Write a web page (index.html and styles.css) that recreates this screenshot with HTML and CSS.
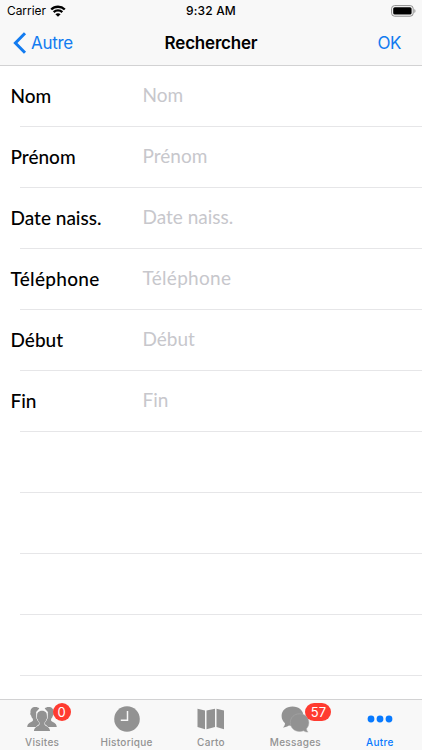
FILE: index.html
```html
<!DOCTYPE html>
<html lang="fr">
<head>
<meta charset="utf-8">
<title>Rechercher</title>
<link rel="stylesheet" href="styles.css">
</head>
<body>
<header class="top">
  <div class="status">
    <div class="carrier"><span>Carrier</span>
      <svg width="16" height="12" viewBox="0 0 16 12"><path d="M1.2 4.500C5 .8 11 .8 14.800 4.500M3.700 7.100c2.400-2.300 6.200-2.300 8.600 0" fill="none" stroke="#000" stroke-width="2.400"/><path d="M8 11.800 5.400 9.200c1.400-1.300 3.800-1.300 5.200 0z"/></svg>
    </div>
    <div class="time">9:32 AM</div>
    <svg class="battery" width="26" height="12" viewBox="0 0 26 12"><rect x=".6" y=".6" width="21.6" height="10.6" rx="3" fill="none" stroke="#8d8d8d" stroke-width="1"/><rect x="2.2" y="2.2" width="18.4" height="7.4" rx="1.6"/><path d="M23.4 4v4c1.4-.5 1.4-3.5 0-4z" fill="#8d8d8d"/></svg>
  </div>
  <nav class="nav">
    <a class="back"><svg width="14" height="22" viewBox="0 0 14 22"><path d="M12 1.3 2.4 11l9.6 9.7" fill="none" stroke="#127bf0" stroke-width="3"/></svg><span>Autre</span></a>
    <h1>Rechercher</h1>
    <a class="ok">OK</a>
  </nav>
</header>
<main class="form">
  <label class="row"><span class="name">Nom</span><span class="hint">Nom</span></label>
  <label class="row"><span class="name">Prénom</span><span class="hint">Prénom</span></label>
  <label class="row"><span class="name">Date naiss.</span><span class="hint">Date naiss.</span></label>
  <label class="row"><span class="name phone">Téléphone</span><span class="hint phone">Téléphone</span></label>
  <label class="row"><span class="name">Début</span><span class="hint">Début</span></label>
  <label class="row"><span class="name">Fin</span><span class="hint">Fin</span></label>
  <div class="row"></div>
  <div class="row"></div>
  <div class="row"></div>
  <div class="row"></div>
</main>
<footer class="tabs">
  <div class="tab">
    <div class="icon people"><svg width="32" height="28" viewBox="0 0 32 28" fill="#929292">
      <path d="M9.500 2C6 2 4.200 4 4.500 7.800c-.5.500-.2 2.300.6 2.700.3 1.500.9 2.500 1.800 3.300v1.900C5.700 17.500 1.500 17.200 1.200 22h9.300c.8-2 2.500-2.500 3-3.500L10.500 13l-.4-6 3.200-3.500C12.300 2.500 11.100 2 9.500 2z"/>
      <path d="M22.500 2c3.500 0 5.300 2 5 5.800.5.500.2 2.300-.6 2.700-.3 1.500-.9 2.500-1.800 3.300v1.900c1.200 1.800 5.400 1.500 5.700 6.300h-9.300c-.8-2-2.500-2.500-3-3.500l3-5.500.4-6-3.200-3.500C19.700 2.500 20.900 2 22.500 2z"/>
      <path d="M16 5.800c-3.600 0-5.200 2.200-4.900 5.600-.6.500-.2 2.500.6 2.900.3 1.500.9 2.500 1.800 3.300v2c-1.100 2-5 1.800-5.600 6.400h16.200c-.6-4.600-4.500-4.400-5.600-6.400v-2c.9-.8 1.500-1.800 1.800-3.300.8-.4 1.200-2.400.6-2.900.3-3.400-1.300-5.600-4.900-5.600z"/></svg><b class="badge zero">0</b></div>
    <span class="cap">Visites</span>
  </div>
  <div class="tab">
    <div class="icon"><svg width="26" height="26" viewBox="0 0 26 26"><circle cx="13" cy="13" r="12.800" fill="#929292"/><path d="M13.500 5v9.200H6.800" fill="none" stroke="#f8f8f8" stroke-width="1.500"/></svg></div>
    <span class="cap">Historique</span>
  </div>
  <div class="tab">
    <div class="icon"><svg width="28" height="22" viewBox="0 0 28 22" fill="#929292"><path d="M.5.8 8 2.400v18.800L.5 19zM9.500 2.400 18 .8V19l-8.500 2.200zM19.500.8 27 2.400v18.800L19.500 19z"/></svg></div>
    <span class="cap">Carto</span>
  </div>
  <div class="tab">
    <div class="icon"><svg width="30" height="28" viewBox="0 0 30 28" fill="#929292"><path d="M12.500 1.500C6 1.500 1.600 5.500 1.600 11.100c0 3 1.300 5.400 3.400 7.200 0 2-.9 3.200-2.200 4.200 2.800 0 4.700-.8 6.100-1.900 1.100.3 2.400.4 3.600.4 6.500 0 11-4.500 11-9.900S19 1.500 12.500 1.500z"/><path d="M19.600 8.800c-5.400 0-9.300 3.700-9.300 8.800s3.900 8.900 9.300 8.900c1.400 0 2.700-.2 3.900-.7 1.400.9 2.800 1.300 4.600 1.300-1-1-1.500-2-1.600-3.400 1.500-1.500 2.400-3.700 2.400-6.100 0-5.100-3.900-8.800-9.300-8.800z" stroke="#adadad" stroke-width=".5"/></svg><b class="badge many">57</b></div>
    <span class="cap">Messages</span>
  </div>
  <div class="tab on">
    <div class="icon"><svg width="26" height="8" viewBox="0 0 26 8" fill="#087aff"><circle cx="4" cy="4" r="3.400"/><circle cx="13" cy="4" r="3.400"/><circle cx="22" cy="4" r="3.400"/></svg></div>
    <span class="cap">Autre</span>
  </div>
</footer>
</body>
</html>
```
FILE: styles.css
```css
* { box-sizing: border-box; }
body {
  margin: 0;
  width: 422px;
  height: 750px;
  overflow: hidden;
  display: flex;
  flex-direction: column;
  background: #fff;
  font-family: Inter, "Liberation Sans", sans-serif;
  color: #000;
}
svg { display: block; flex: none; }
.top {
  height: 66px;
  flex: none;
  background: #f8f8f8;
  border-bottom: 1px solid #d2d2d3;
}
.status {
  height: 21px;
  display: grid;
  grid-template-columns: 1fr auto 1fr;
  align-items: center;
  padding: 0 5px;
  font-size: 12px;
}
.carrier { display: flex; align-items: center; gap: 4px; padding-left: 2px; font-size: 11.9px; }
.time { font-weight: 500; font-size: 12px; letter-spacing: 0.15px; }
.battery { justify-self: end; }
.nav {
  height: 44px;
  display: grid;
  grid-template-columns: 1fr auto 1fr;
  align-items: center;
  padding: 0 13px;
  font-size: 17px;
  line-height: 22px;
}
.back, .ok { color: #127bf0; }
.back { display: flex; align-items: center; gap: 4px; letter-spacing: -0.3px; }
.ok { justify-self: end; padding-right: 8px; letter-spacing: -0.4px; }
.nav h1 { margin: 0; font-size: 17px; font-weight: 600; letter-spacing: -0.2px; }
.form { flex: 1; min-height: 0; overflow: hidden; }
.row {
  height: 61px;
  display: grid;
  grid-template-columns: 132px 1fr;
  align-items: center;
  padding: 0 0 3px 10.5px;
  font-family: Lato, sans-serif;
  font-size: 19px;
  background: linear-gradient(#e6e6e8, #e6e6e8) 20px 100% / 100% 1px no-repeat;
}
.name { font-weight: 500; }
.hint { color: #c7c7cc; font-weight: 400; padding-bottom: 1px; }
.phone { letter-spacing: 0.3px; }
.tabs {
  height: 51px;
  flex: none;
  display: grid;
  grid-template-columns: repeat(5, 1fr);
  background: #f8f8f8;
  border-top: 1px solid #d2d2d3;
}
.tab { display: flex; flex-direction: column; align-items: center; color: #929292; }
.icon {
  position: relative;
  height: 36px;
  padding-top: 2px;
  display: flex;
  align-items: center;
}
.cap { font-size: 10px; line-height: 12px; font-weight: 500; letter-spacing: 0.3px; }
.on { color: #087aff; }
.badge {
  position: absolute;
  top: 3px;
  height: 18px;
  border-radius: 9px;
  background: #ff3b30;
  color: #fff;
  font-size: 13px;
  font-weight: 400;
  line-height: 18px;
  text-align: center;
}
.zero { left: 26.500px; width: 18px; }
.many { left: 25px; width: 26px; }
.people svg path:last-child { stroke: #f8f8f8; stroke-width: 1px; paint-order: stroke; }
```
